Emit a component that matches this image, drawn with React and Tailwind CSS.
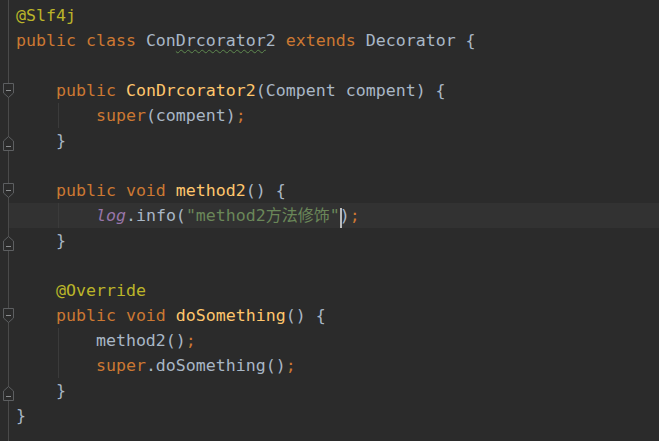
import React from "react";

const K = "text-[#cc7832]";
const D = "text-[#a9b7c6]";
const A = "text-[#bbb529]";
const M = "text-[#ffc66d]";
const S = "text-[#6a8759]";

function FoldStart() {
  return (
    <svg width="12" height="16" viewBox="0 0 12 16" className="absolute left-[3px] top-[5px]">
      <path d="M0.5 0.5 H10.5 V10 L5.5 14.5 L0.5 10 Z" fill="#2b2b2b" stroke="#5d5f61" />
      <path d="M3 7.5 H8" stroke="#8a8c8e" />
    </svg>
  );
}

function FoldEnd() {
  return (
    <svg width="12" height="16" viewBox="0 0 12 16" className="absolute left-[3px] top-[7px]">
      <path d="M0.5 15.5 H10.5 V6 L5.5 1.5 L0.5 6 Z" fill="#2b2b2b" stroke="#5d5f61" />
      <path d="M3 11.5 H8" stroke="#8a8c8e" />
    </svg>
  );
}

function Row({ children, fold, guide, active }) {
  return (
    <div className="flex h-[25px] relative">
      <div className="w-[8px] shrink-0" />
      <div className="w-px shrink-0 bg-[#4a4a4a]" />
      <div className={`flex-1 relative pl-[7px] leading-[25px] whitespace-pre ${active ? "bg-[#323232]" : ""}`}>
        {guide && <div className="absolute left-[49px] top-0 bottom-0 w-px bg-[#3b3b3b]" />}
        {children}
      </div>
      {fold === "start" && <FoldStart />}
      {fold === "end" && <FoldEnd />}
    </div>
  );
}

export default function App() {
  return (
    <div
      className="w-[659px] h-[441px] bg-[#2b2b2b] overflow-hidden pt-[3px] relative text-[16.6px]"
      style={{ fontFamily: "'DejaVu Sans Mono', 'Noto Sans CJK SC', monospace" }}
    >
      <div className="absolute left-[8px] top-0 w-px h-[3px] bg-[#4a4a4a]" />
      <Row><span className={A}>@Slf4j</span></Row>
      <Row>
        <span className={K}>public class </span>
        <span className={D}>Con</span>
        <span className={`${D} underline decoration-wavy decoration-[#5f8a4f] decoration-1 underline-offset-[3px]`}>Drcorator</span>
        <span className={D}>2 </span>
        <span className={K}>extends </span>
        <span className={D}>Decorator {"{"}</span>
      </Row>
      <Row />
      <Row fold="start">
        <span className={K}>    public </span>
        <span className={M}>ConDrcorator2</span>
        <span className={D}>(Compent compent) {"{"}</span>
      </Row>
      <Row guide>
        <span className={K}>        super</span>
        <span className={D}>(compent)</span>
        <span className={K}>;</span>
      </Row>
      <Row fold="end"><span className={D}>    {"}"}</span></Row>
      <Row />
      <Row fold="start">
        <span className={K}>    public void </span>
        <span className={M}>method2</span>
        <span className={D}>() {"{"}</span>
      </Row>
      <Row guide active>
        <span className={D}>        </span>
        <span className="text-[#9876aa] italic">log</span>
        <span className={D}>.info(</span>
        <span className={S}>"method2<span className="text-[16px]">方法修饰</span>"</span>
        <span className="relative">
          <span className="absolute left-[0px] top-[2px] w-[2px] h-[20px] bg-[#bbbbbb]" />
        </span>
        <span className={D}>)</span>
        <span className={K}>;</span>
      </Row>
      <Row fold="end"><span className={D}>    {"}"}</span></Row>
      <Row />
      <Row><span className={A}>    @Override</span></Row>
      <Row fold="start">
        <span className={K}>    public void </span>
        <span className={M}>doSomething</span>
        <span className={D}>() {"{"}</span>
      </Row>
      <Row guide>
        <span className={D}>        method2()</span>
        <span className={K}>;</span>
      </Row>
      <Row guide>
        <span className={K}>        super</span>
        <span className={D}>.doSomething()</span>
        <span className={K}>;</span>
      </Row>
      <Row fold="end"><span className={D}>    {"}"}</span></Row>
      <Row><span className={D}>{"}"}</span></Row>
      <Row />
    </div>
  );
}
